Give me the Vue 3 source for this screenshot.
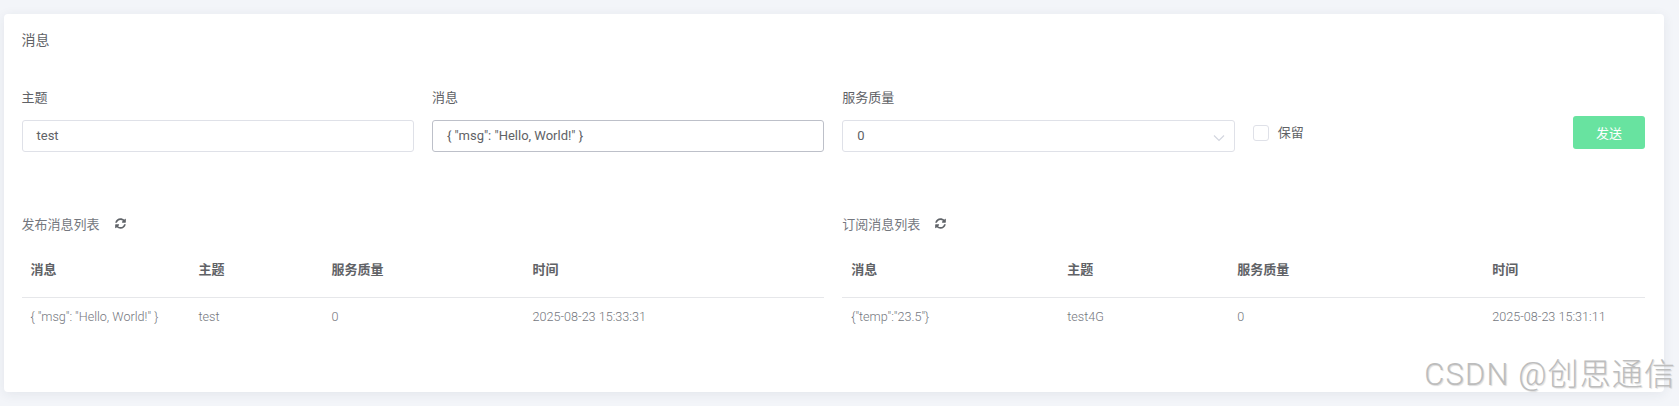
<script setup>
const sync = 'M370.72 133.28C339.458 104.008 298.888 87.962 255.848 88c-77.458.068-144.328 53.178-162.791 126.85-1.344 5.363-6.122 9.15-11.651 9.15H24.103c-7.498 0-13.194-6.807-11.807-14.176C33.933 94.924 134.813 8 256 8c66.448 0 126.791 26.136 171.315 68.685L463.03 40.97C478.149 25.851 504 36.559 504 57.941V192c0 13.255-10.745 24-24 24H345.941c-21.382 0-32.09-25.851-16.971-40.971l41.75-41.749zM32 296h134.059c21.382 0 32.09 25.851 16.971 40.971l-41.75 41.75c31.262 29.273 71.835 45.319 114.876 45.28 77.418-.07 144.315-53.144 162.787-126.849 1.344-5.363 6.122-9.15 11.651-9.15h57.304c7.498 0 13.194 6.807 11.807 14.176C478.067 417.076 377.187 504 256 504c-66.448 0-126.791-26.136-171.315-68.685L48.97 471.03C33.851 486.149 8 475.441 8 454.059V320c0-13.255 10.745-24 24-24z'
const lists = [
  { title: '发布消息列表', kind: 'pub', row: ['{ "msg": "Hello, World!" }', 'test', '0', '2025-08-23 15:33:31'] },
  { title: '订阅消息列表', kind: 'sub', row: ['{"temp":"23.5"}', 'test4G', '0', '2025-08-23 15:31:11'] },
]
const heads = ['消息', '主题', '服务质量', '时间']
</script>

<template>
  <div class="page">
    <section class="card">
      <h2 class="title">消息</h2>
      <div class="form">
        <label class="field">
          <span class="label">主题</span>
          <span class="input">test</span>
        </label>
        <label class="field">
          <span class="label">消息</span>
          <span class="input focused">{ "msg": "Hello, World!" }</span>
        </label>
        <label class="field">
          <span class="label">服务质量</span>
          <span class="input select">
            0
            <svg class="chevron" viewBox="0 0 12 8" width="12" height="8"><path d="M1 1.5l5 5 5-5" fill="none" stroke="#d3d6df" stroke-width="1.2" /></svg>
          </span>
        </label>
        <div class="actions">
          <span class="retain"><i class="box"></i>保留</span>
          <button class="send" type="button">发送</button>
        </div>
      </div>
      <div class="lists">
        <div v-for="l in lists" :key="l.kind" class="list">
          <div class="list-head">
            <span>{{ l.title }}</span>
            <svg class="sync" viewBox="0 0 512 512" width="11" height="11"><path :d="sync" fill="#5f6368" /></svg>
          </div>
          <table :class="l.kind">
            <colgroup><col class="c1" /><col class="c2" /><col class="c3" /><col class="c4" /></colgroup>
            <thead><tr><th v-for="h in heads" :key="h">{{ h }}</th></tr></thead>
            <tbody><tr><td v-for="c in l.row" :key="c">{{ c }}</td></tr></tbody>
          </table>
        </div>
      </div>
    </section>
    <div class="watermark">CSDN @创思通信</div>
  </div>
</template>

<style>
html, body { margin: 0; background: #f3f5f9; }
</style>

<style scoped>
.page {
  position: relative;
  height: 406px;
  box-sizing: border-box;
  padding: 14px 15px 14px 4px;
  overflow: hidden;
  font-family: Roboto, "Noto Sans CJK SC", sans-serif;
  font-size: 13px;
  color: #606266;
}
.card {
  height: 378px;
  box-sizing: border-box;
  padding: 16px 19px 0 17.5px;
  background: #fff;
  border-radius: 4px;
  box-shadow: 0 2px 12px rgba(40, 50, 80, 0.08);
}
.title {
  margin: 0;
  font-size: 14px;
  font-weight: 400;
  line-height: 20px;
}
.form {
  display: grid;
  grid-template-columns: repeat(4, 1fr);
  column-gap: 18px;
  margin-top: 38px;
  align-items: start;
}
.field { display: flex; flex-direction: column; }
.label { line-height: 20px; margin-bottom: 12px; }
.input {
  position: relative;
  box-sizing: border-box;
  height: 32px;
  line-height: 30px;
  padding: 0 14px;
  font-size: 13px;
  color: #606266;
  border: 1px solid #dfe1e8;
  border-radius: 3px;
  background: #fff;
}
.focused { border-color: #bdc0c9; }
.chevron { position: absolute; right: 9px; top: 13px; }
.actions {
  display: flex;
  align-items: flex-start;
  justify-content: space-between;
  padding-top: 28px;
}
.retain {
  display: flex;
  align-items: center;
  gap: 9px;
  height: 33px;
  line-height: 20px;
}
.box {
  width: 16px;
  height: 16px;
  box-sizing: border-box;
  border: 1px solid #dfe1e8;
  border-radius: 3px;
}
.send {
  width: 72px;
  height: 33px;
  border: 0;
  border-radius: 3px;
  background: #68e3a0;
  color: #fff;
  font: inherit;
  padding: 0;
}
.lists {
  display: grid;
  grid-template-columns: repeat(2, 1fr);
  column-gap: 18px;
  margin-top: 61px;
}
.list-head {
  display: flex;
  align-items: center;
  gap: 15px;
  height: 20px;
  color: #74777e;
}
table {
  width: 100%;
  table-layout: fixed;
  border-collapse: collapse;
  margin-top: 10px;
}
th, td {
  padding: 0 9px;
  text-align: left;
  white-space: nowrap;
}
th {
  height: 54px;
  padding-bottom: 3px;
  box-sizing: border-box;
  font-weight: 700;
  color: #606266;
  border-bottom: 1px solid #e6e7ea;
}
td {
  height: 38px;
  font-size: 12.6px;
  font-weight: 300;
  color: #74777e;
}
.pub .c1 { width: 168px; }
.pub .c2 { width: 133px; }
.pub .c3 { width: 201px; }
.sub .c1 { width: 216px; }
.sub .c2 { width: 170px; }
.sub .c3 { width: 255px; }
.watermark {
  position: absolute;
  right: 3px;
  bottom: 14px;
  font-family: Roboto, "Noto Sans CJK SC", sans-serif;
  font-weight: 300;
  font-size: 31px;
  line-height: 34px;
  letter-spacing: 1.1px;
  color: #bdbdbd;
  text-shadow: 1px 1px 1px rgba(0, 0, 0, 0.14);
  white-space: nowrap;
}
</style>
